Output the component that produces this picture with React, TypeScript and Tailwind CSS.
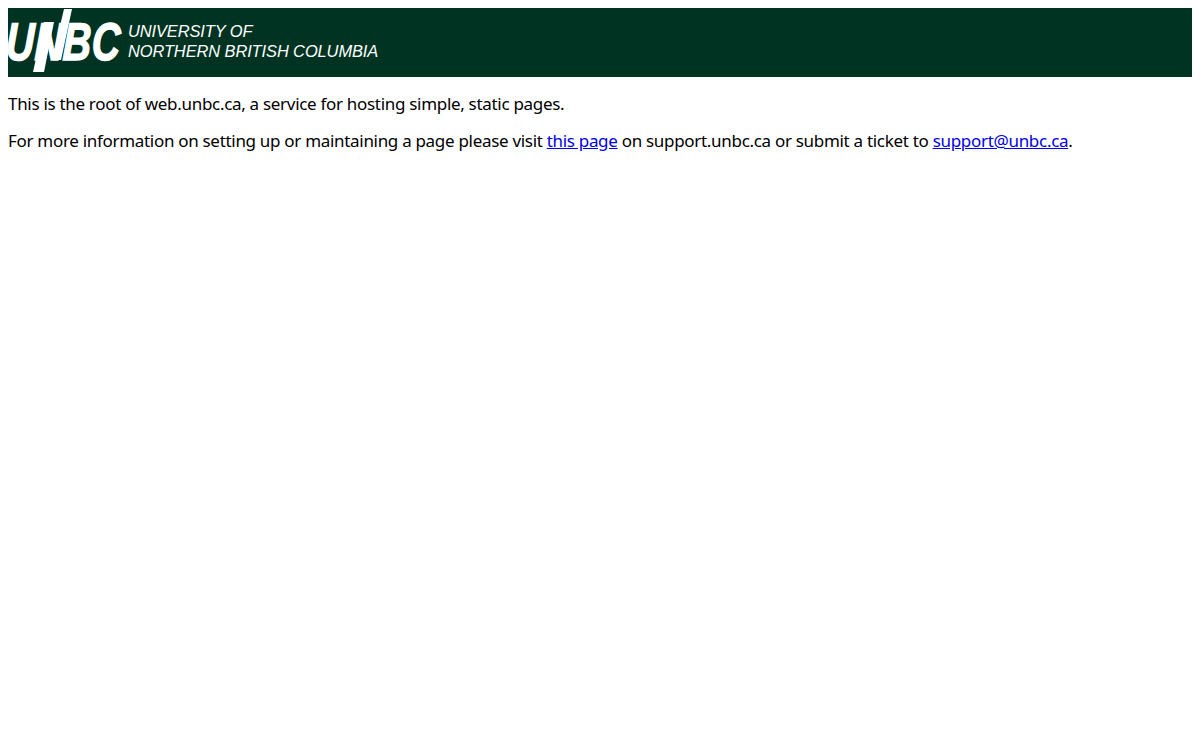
const letters = ["U", "N", "B", "C"];

export default function App() {
  return (
    <div className="bg-white min-h-[740px] p-2 text-black text-[17px] leading-[21px] tracking-[-0.305px]" style={{ fontFamily: '"Noto Sans", sans-serif' }}>
      <header className="bg-[#013323] h-[69px] flex items-start">
        <div className="relative w-[120px] h-[69px] shrink-0">
          <svg className="absolute left-0 top-0" width="120" height="69" viewBox="0 0 120 69">
            <polygon points="36,14 46,14 36,64 25,64" fill="#ffffff" />
            <polygon points="56,1 64,1 53,52 44,52" fill="#ffffff" />
          </svg>
          <div className="absolute left-[-1px] top-[7px] flex text-white font-bold italic text-[53px] leading-[53px] whitespace-nowrap [-webkit-text-stroke:1.5px_white]" style={{ fontFamily: '"Liberation Sans", sans-serif' }}>
            {letters.map((l) => (
              <span key={l} className="inline-block w-[28.5px] origin-top-left scale-x-[0.74] -skew-x-3">{l}</span>
            ))}
          </div>
        </div>
        <div className="mt-[13px] text-white italic text-[16.45px] leading-[20px] whitespace-nowrap tracking-[-0.1px]" style={{ fontFamily: '"Liberation Sans", sans-serif' }}>
          <div>UNIVERSITY OF</div>
          <div>NORTHERN BRITISH COLUMBIA</div>
        </div>
      </header>
      <p className="mt-4">This is the root of web.unbc.ca, a service for hosting simple, static pages.</p>
      <p className="mt-4">
        For more information on setting up or maintaining a page please visit <a href="#" className="text-[#0000ee] underline">this page</a> on support.unbc.ca or submit a ticket to <a href="#" className="text-[#0000ee] underline">support@unbc.ca</a>.
      </p>
    </div>
  );
}
